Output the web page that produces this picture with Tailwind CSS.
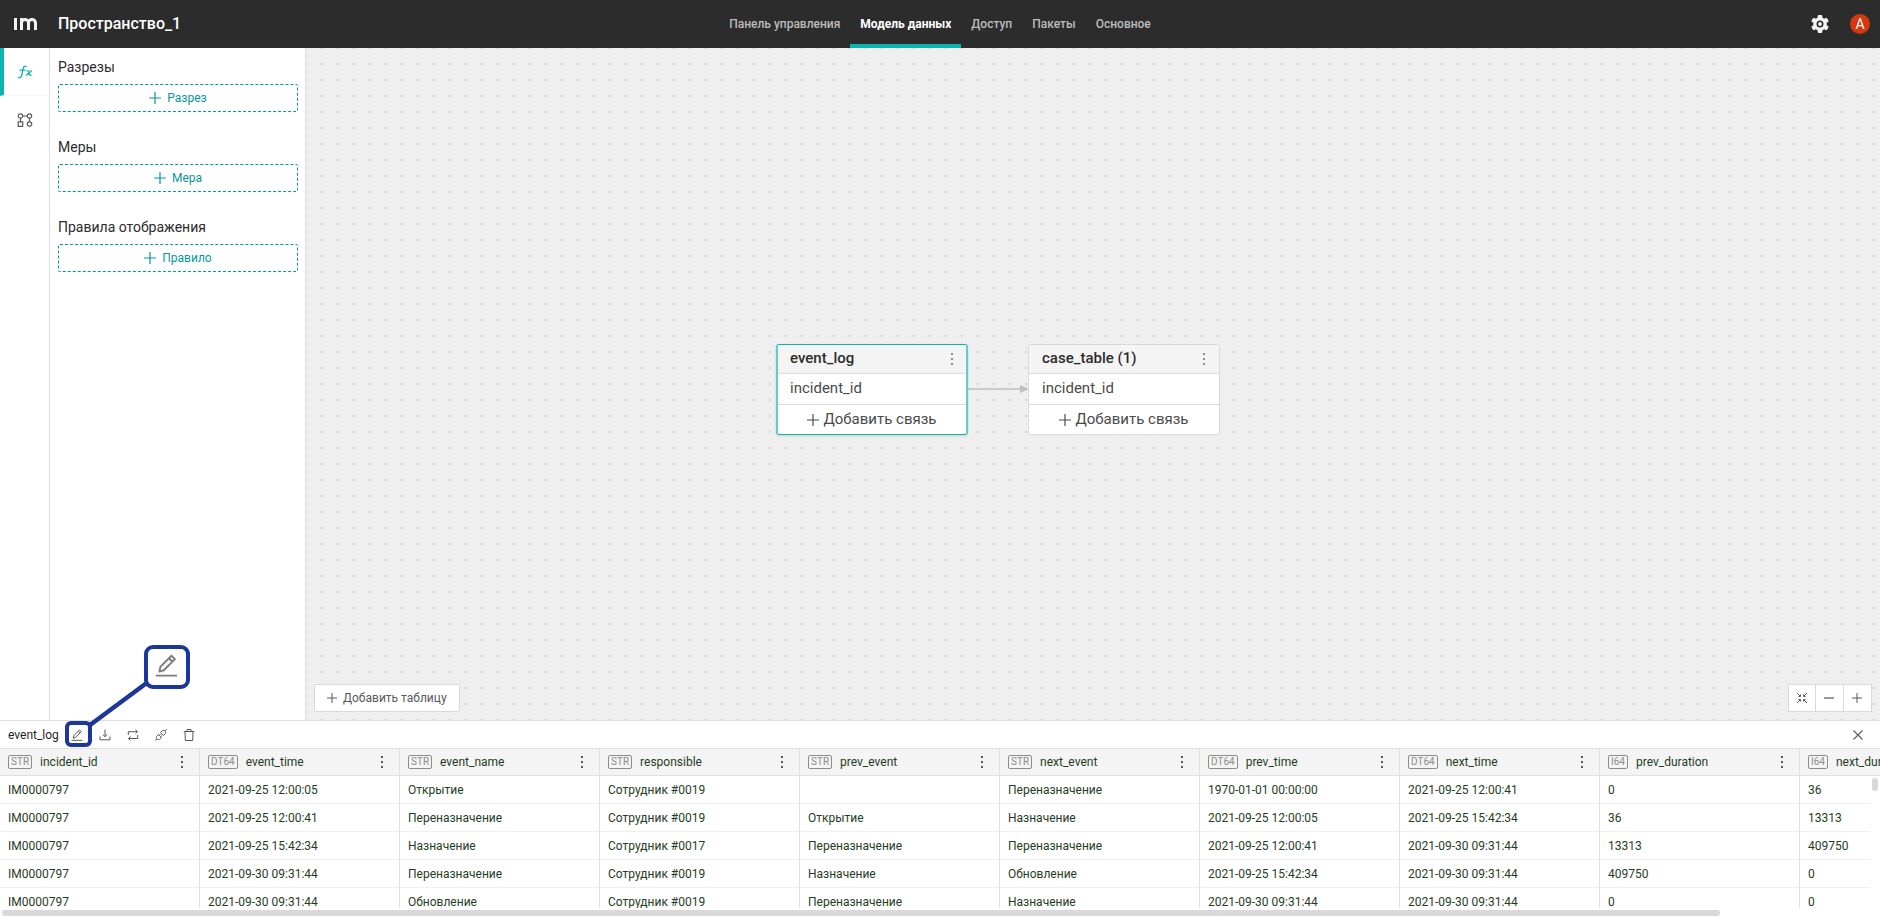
<!DOCTYPE html>
<html lang="ru">
<head>
<meta charset="utf-8">
<meta name="viewport" content="width=device-width, initial-scale=1">
<title>Пространство_1</title>
<script src="https://cdn.jsdelivr.net/npm/@tailwindcss/browser@4"></script>
</head>
<body class="relative flex h-screen flex-col overflow-hidden bg-white font-['Roboto',sans-serif] text-xs text-[#2c2c2c]">

<!-- Shared icons -->
<svg class="hidden" aria-hidden="true">
  <symbol id="plus" viewBox="0 0 12 12"><path d="M6 0v12M0 6h12" fill="none" stroke="currentColor" stroke-width="1.2"/></symbol>
  <symbol id="dots" viewBox="0 0 4 12"><path d="M1 0h2v2H1zM1 5h2v2H1zM1 10h2v2H1z" fill="currentColor"/></symbol>
  <symbol id="pencil" viewBox="0 0 12 12"><path d="M.5 11.3h11M2.3 9.2l.5-2.5L8.6.9l1.8 1.8-5.8 5.8zM7.3 2.2l1.8 1.8" fill="none" stroke="currentColor" stroke-linejoin="round"/></symbol>
</svg>

<header class="grid h-12 shrink-0 grid-cols-[1fr_auto_1fr] items-center bg-[#2c2c2c] text-white">
  <div class="flex items-center">
    <svg class="ml-3.5 mr-5 h-3 w-6" viewBox="0 0 24 12" role="img" aria-label="im"><path d="M1.500 0v12M7.500 12V0M7.500 5C7.500 .5 14.500 .2 14.500 5V12M14.500 5C14.500 .2 21.500 .2 21.500 5V12" fill="none" stroke="#f4f4f4" stroke-width="3"/></svg>
    <h1 class="text-base font-medium">Пространство_1</h1>
  </div>
  <nav class="flex h-12 font-medium text-[#bcbcbc]">
    <a href="#" class="flex items-center px-2.5">Панель управления</a>
    <a href="#" class="flex items-center border-y-4 border-t-transparent border-b-[#0db4b4] px-2.5 font-bold text-white" aria-current="page">Модель данных</a>
    <a href="#" class="flex items-center px-2.5">Доступ</a>
    <a href="#" class="flex items-center px-2.5">Пакеты</a>
    <a href="#" class="flex items-center px-2.5">Основное</a>
  </nav>
  <div class="flex items-center justify-end gap-[21px] pr-2.5">
    <button aria-label="Настройки">
      <svg class="size-[18px]" viewBox="0 0 18 18"><g fill="#f4f4f4"><circle cx="9" cy="9" r="6.8"/><g id="tooth"><rect x="6.7" y="0" width="4.6" height="18" rx="1.2"/></g><use href="#tooth" transform="rotate(60 9 9)"/><use href="#tooth" transform="rotate(120 9 9)"/></g><circle cx="9" cy="9" r="2.7" fill="#f4f4f4" stroke="#2c2c2c" stroke-width="1.6"/></svg>
    </button>
    <button class="flex size-5 items-center justify-center rounded-full bg-[#d4380d] text-sm text-white">A</button>
  </div>
</header>

<main class="flex min-h-0 flex-1">
  <nav class="flex w-[50px] shrink-0 flex-col border-r border-[#e0e0e0]">
    <a href="#" aria-label="Показатели" class="flex h-12 items-center justify-center border-b border-l-4 border-b-[#f8f8f8] border-l-[#0db4b4] pr-1 text-[#0db4b4]">
      <svg class="h-3.5 w-4" viewBox="0 0 16 14" fill="none" stroke="currentColor" stroke-width="1.3"><path d="M9.500 1.700C8 .7 6.700 1.200 6.300 3L4.700 10.500C4.300 12.600 2.800 13.200 1 12.300M2.500 5.200h6"/><path d="M9.500 5.700c1.500-.6 2 .5 2.400 2.300s1.200 2.700 2.600 2M14.800 5.400l-5.800 5"/></svg>
    </a>
    <a href="#" aria-label="Схема" class="flex h-12 items-center justify-center text-[#595959]">
      <svg class="h-3.5 w-4" viewBox="0 0 16 14" fill="none" stroke="currentColor" stroke-width="1.200"><circle cx="3.500" cy="3" r="2.200"/><circle cx="12.500" cy="3" r="2.200"/><circle cx="12.500" cy="11" r="2.200"/><path d="M1.200 8.800h4.500v4.500H1.200zM5.700 3h4.600M3.500 5.200v3.600M12.500 5.200v3.600"/></svg>
    </a>
  </nav>

  <aside class="flex w-64 shrink-0 flex-col gap-[25px] border-r border-[#e0e0e0] pl-2 pr-[7px] pt-[9px] pb-4">
    <section>
      <h2 class="mb-[7px] text-sm leading-5">Разрезы</h2>
      <button class="flex h-7 w-full items-center justify-center gap-1.5 rounded-xs border border-dashed border-[#08979c] text-[#08979c]"><svg class="size-3"><use href="#plus"/></svg>Разрез</button>
    </section>
    <section>
      <h2 class="mb-[7px] text-sm leading-5">Меры</h2>
      <button class="flex h-7 w-full items-center justify-center gap-1.5 rounded-xs border border-dashed border-[#08979c] text-[#08979c]"><svg class="size-3"><use href="#plus"/></svg>Мера</button>
    </section>
    <section>
      <h2 class="mb-[7px] text-sm leading-5">Правила отображения</h2>
      <button class="flex h-7 w-full items-center justify-center gap-1.5 rounded-xs border border-dashed border-[#08979c] text-[#08979c]"><svg class="size-3"><use href="#plus"/></svg>Правило</button>
    </section>
  </aside>

  <div class="relative min-w-0 flex-1 bg-[#efefef]">
    <svg class="absolute inset-0 h-full w-full" aria-hidden="true">
      <pattern id="grid" x="-1" y="-1" width="16" height="16" patternUnits="userSpaceOnUse"><rect width="2" height="2" fill="#d6d6d6"/></pattern>
      <rect width="100%" height="100%" fill="url(#grid)"/>
    </svg>

    <!-- Diagram nodes and the link between them -->
    <svg class="absolute left-[662px] top-[334px] h-3 w-[61px] text-[#bfbfbf]" viewBox="0 0 61 12"><path d="M0 7h53" stroke="currentColor" stroke-width="1.300"/><path d="M52 3l9 4-9 4z" fill="currentColor"/></svg>
    <article class="absolute left-[470px] top-[296px] w-48 overflow-hidden rounded-[3px] border-x-2 border-y border-x-[#5fcdcd] border-y-[#0db4b4] bg-white text-[15px] text-[#4a4a4a] shadow-sm">
      <h3 class="flex h-[29px] items-center justify-between border-b border-[#dcdcdc] bg-[#f4f4f4] pl-3 pr-3 font-medium text-[#2c2c2c]">event_log<button aria-label="Меню event_log" class="text-[#8c8c8c]"><svg class="h-3 w-1"><use href="#dots"/></svg></button></h3>
      <p class="flex h-[31px] items-center border-b border-[#dcdcdc] pl-3">incident_id</p>
      <button class="flex h-[29px] w-full items-center justify-center gap-1 pt-px"><svg class="size-3"><use href="#plus"/></svg>Добавить связь</button>
    </article>
    <article class="absolute left-[722px] top-[296px] w-48 overflow-hidden rounded-[3px] border border-[#d9d9d9] bg-white text-[15px] text-[#4a4a4a]">
      <h3 class="flex h-[29px] items-center justify-between border-b border-[#dcdcdc] bg-[#f4f4f4] pl-[13px] pr-[13px] font-medium text-[#2c2c2c]">case_table (1)<button aria-label="Меню case_table" class="text-[#8c8c8c]"><svg class="h-3 w-1"><use href="#dots"/></svg></button></h3>
      <p class="flex h-[31px] items-center border-b border-[#dcdcdc] pl-[13px]">incident_id</p>
      <button class="flex h-[29px] w-full items-center justify-center gap-1 pt-px"><svg class="size-3"><use href="#plus"/></svg>Добавить связь</button>
    </article>

    <div class="absolute inset-x-2 bottom-2 flex items-center justify-between">
      <button class="flex h-7 items-center gap-1.5 rounded-xs border border-[#d9d9d9] bg-white px-3 text-[#595959]"><svg class="size-2.5"><use href="#plus"/></svg>Добавить таблицу</button>
      <div class="grid h-7 w-[84px] grid-cols-3 divide-x divide-[#d9d9d9] border border-[#d9d9d9] bg-white text-[#595959]">
        <button class="flex items-center justify-center" aria-label="Вписать"><svg class="size-3" viewBox="0 0 12 12" fill="none" stroke="currentColor"><path d="M1 1l3 3M11 1L8 4M1 11l3-3M11 11L8 8M4.500 2.500v2h-2M7.500 2.500v2h2M4.500 9.500v-2h-2M7.500 9.500v-2h2"/></svg></button>
        <button class="flex items-center justify-center" aria-label="Уменьшить"><svg class="size-3" viewBox="0 0 12 12"><path d="M1 6h10" stroke="currentColor" stroke-width="1.200"/></svg></button>
        <button class="flex items-center justify-center" aria-label="Увеличить"><svg class="size-2.5"><use href="#plus"/></svg></button>
      </div>
    </div>
  </div>
</main>

<section class="shrink-0 border-t border-[#e0e0e0]">
  <div class="flex h-[27px] items-center pl-2 pr-4 text-[#595959]">
    <h2 class="mr-3 text-[#1f1f1f]">event_log</h2>
    <div class="flex gap-4">
      <button aria-label="Изменить"><svg class="size-3"><use href="#pencil"/></svg></button>
      <button aria-label="Скачать"><svg class="size-3" viewBox="0 0 12 12" fill="none" stroke="currentColor"><path d="M6 .5v7M3.800 5.500L6 7.700l2.200-2.200M1 7.500v3.300h10V7.500"/></svg></button>
      <button aria-label="Обновить"><svg class="size-3" viewBox="0 0 12 12" fill="none" stroke="currentColor"><path d="M1.300 6V2.700h9M8.500.8l2 1.900-2 1.900M10.700 6v3.500h-9M3.500 7.600l-2 1.900 2 1.900"/></svg></button>
      <button aria-label="Связь"><svg class="size-3" viewBox="0 0 12 12" fill="none" stroke="currentColor"><path d="M.3 11.700l1.600-1.600M10.100 1.900L11.700.3M5.500 3.500L7 2c2-2 5 1 3 3L8.500 6.500zM3.500 5.500L2 7c-2 2 1 5 3 3l1.500-1.500zM4.300 6.300l1.200-1.200M5.700 7.700l1.200-1.200"/></svg></button>
      <button aria-label="Удалить"><svg class="size-3" viewBox="0 0 12 12" fill="none" stroke="currentColor"><path d="M.8 2.500h10.400M4 2.500v-2h4v2M2 2.500l.3 9h7.400l.3-9"/></svg></button>
    </div>
    <button class="ml-auto" aria-label="Закрыть"><svg class="size-3" viewBox="0 0 12 12"><path d="M1.500 1.500l9 9M10.500 1.500l-9 9" stroke="currentColor" stroke-width="1.100"/></svg></button>
  </div>

  <div class="relative h-[160px] overflow-hidden border-t border-[#e0e0e0]">
    <table class="w-[2000px] table-fixed border-separate border-spacing-0 text-left text-[#1f3d24]">
      <thead><tr id="head"></tr></thead>
      <tbody id="rows"></tbody>
    </table>
    <div class="absolute bottom-0 right-0 top-[27px] w-2.5 bg-white"><div class="mx-0.5 mt-0.5 h-[13px] rounded-full bg-[#d9d9d9]"></div></div>
  </div>
  <div class="h-3 px-0.5 pt-0.5"><div class="h-1.5 w-[91.600%] rounded-full bg-[#d9d9d9]"></div></div>
</section>

<!-- Callout enlarging the edit button -->
<div class="pointer-events-none absolute bottom-[172px] left-[65px] h-[105px] w-[126px]" aria-hidden="true">
  <svg class="h-full w-full" viewBox="0 0 126 105" fill="none" stroke="#1c3799"><path d="M25 82L83 39" stroke-width="4.500"/><rect x="2" y="80" width="23" height="22" rx="4" stroke-width="4"/><rect x="81" y="4" width="42" height="40" rx="7" fill="#fff" stroke-width="4"/></svg>
  <svg class="absolute left-[90px] top-[11px] size-[23px] text-[#7d7d7d]"><use href="#pencil"/></svg>
</div>

<template id="head-cell">
  <th class="h-[27px] border-b border-r border-[#e0e0e0] bg-[#f4f4f4] px-2 font-normal">
    <div class="flex items-center">
      <span class="mr-2 flex h-3.5 items-center rounded-xs border border-[#8c8c8c] px-0.5 text-[10px] text-[#8c8c8c]"></span>
      <span class="whitespace-nowrap"></span>
      <button class="ml-auto mr-[7px] text-[#595959]" aria-label="Меню столбца"><svg class="h-3 w-1"><use href="#dots"/></svg></button>
    </div>
  </th>
</template>
<template id="body-cell"><td class="h-7 border-b border-r border-b-[#efefef] border-r-[#e0e0e0] px-2"></td></template>

<script>
const columns = [['STR','incident_id'],['DT64','event_time'],['STR','event_name'],['STR','responsible'],['STR','prev_event'],['STR','next_event'],['DT64','prev_time'],['DT64','next_time'],['I64','prev_duration'],['I64','next_duration']];
const data = [
['IM0000797','2021-09-25 12:00:05','Открытие','Сотрудник #0019','','Переназначение','1970-01-01 00:00:00','2021-09-25 12:00:41','0','36'],
['IM0000797','2021-09-25 12:00:41','Переназначение','Сотрудник #0019','Открытие','Назначение','2021-09-25 12:00:05','2021-09-25 15:42:34','36','13313'],
['IM0000797','2021-09-25 15:42:34','Назначение','Сотрудник #0017','Переназначение','Переназначение','2021-09-25 12:00:41','2021-09-30 09:31:44','13313','409750'],
['IM0000797','2021-09-30 09:31:44','Переназначение','Сотрудник #0019','Назначение','Обновление','2021-09-25 15:42:34','2021-09-30 09:31:44','409750','0'],
['IM0000797','2021-09-30 09:31:44','Обновление','Сотрудник #0019','Переназначение','Назначение','2021-09-30 09:31:44','2021-09-30 09:31:44','0','0']];
const make = id => document.getElementById(id).content.firstElementChild.cloneNode(true);
for (const [type, name] of columns) {
  const th = make('head-cell');
  const [badge, label] = th.querySelectorAll('span');
  badge.textContent = type;
  label.textContent = name;
  document.getElementById('head').append(th);
}
for (const values of data) {
  const tr = document.createElement('tr');
  for (const v of values) { const td = make('body-cell'); td.textContent = v; tr.append(td); }
  document.getElementById('rows').append(tr);
}
</script>
</body>
</html>
